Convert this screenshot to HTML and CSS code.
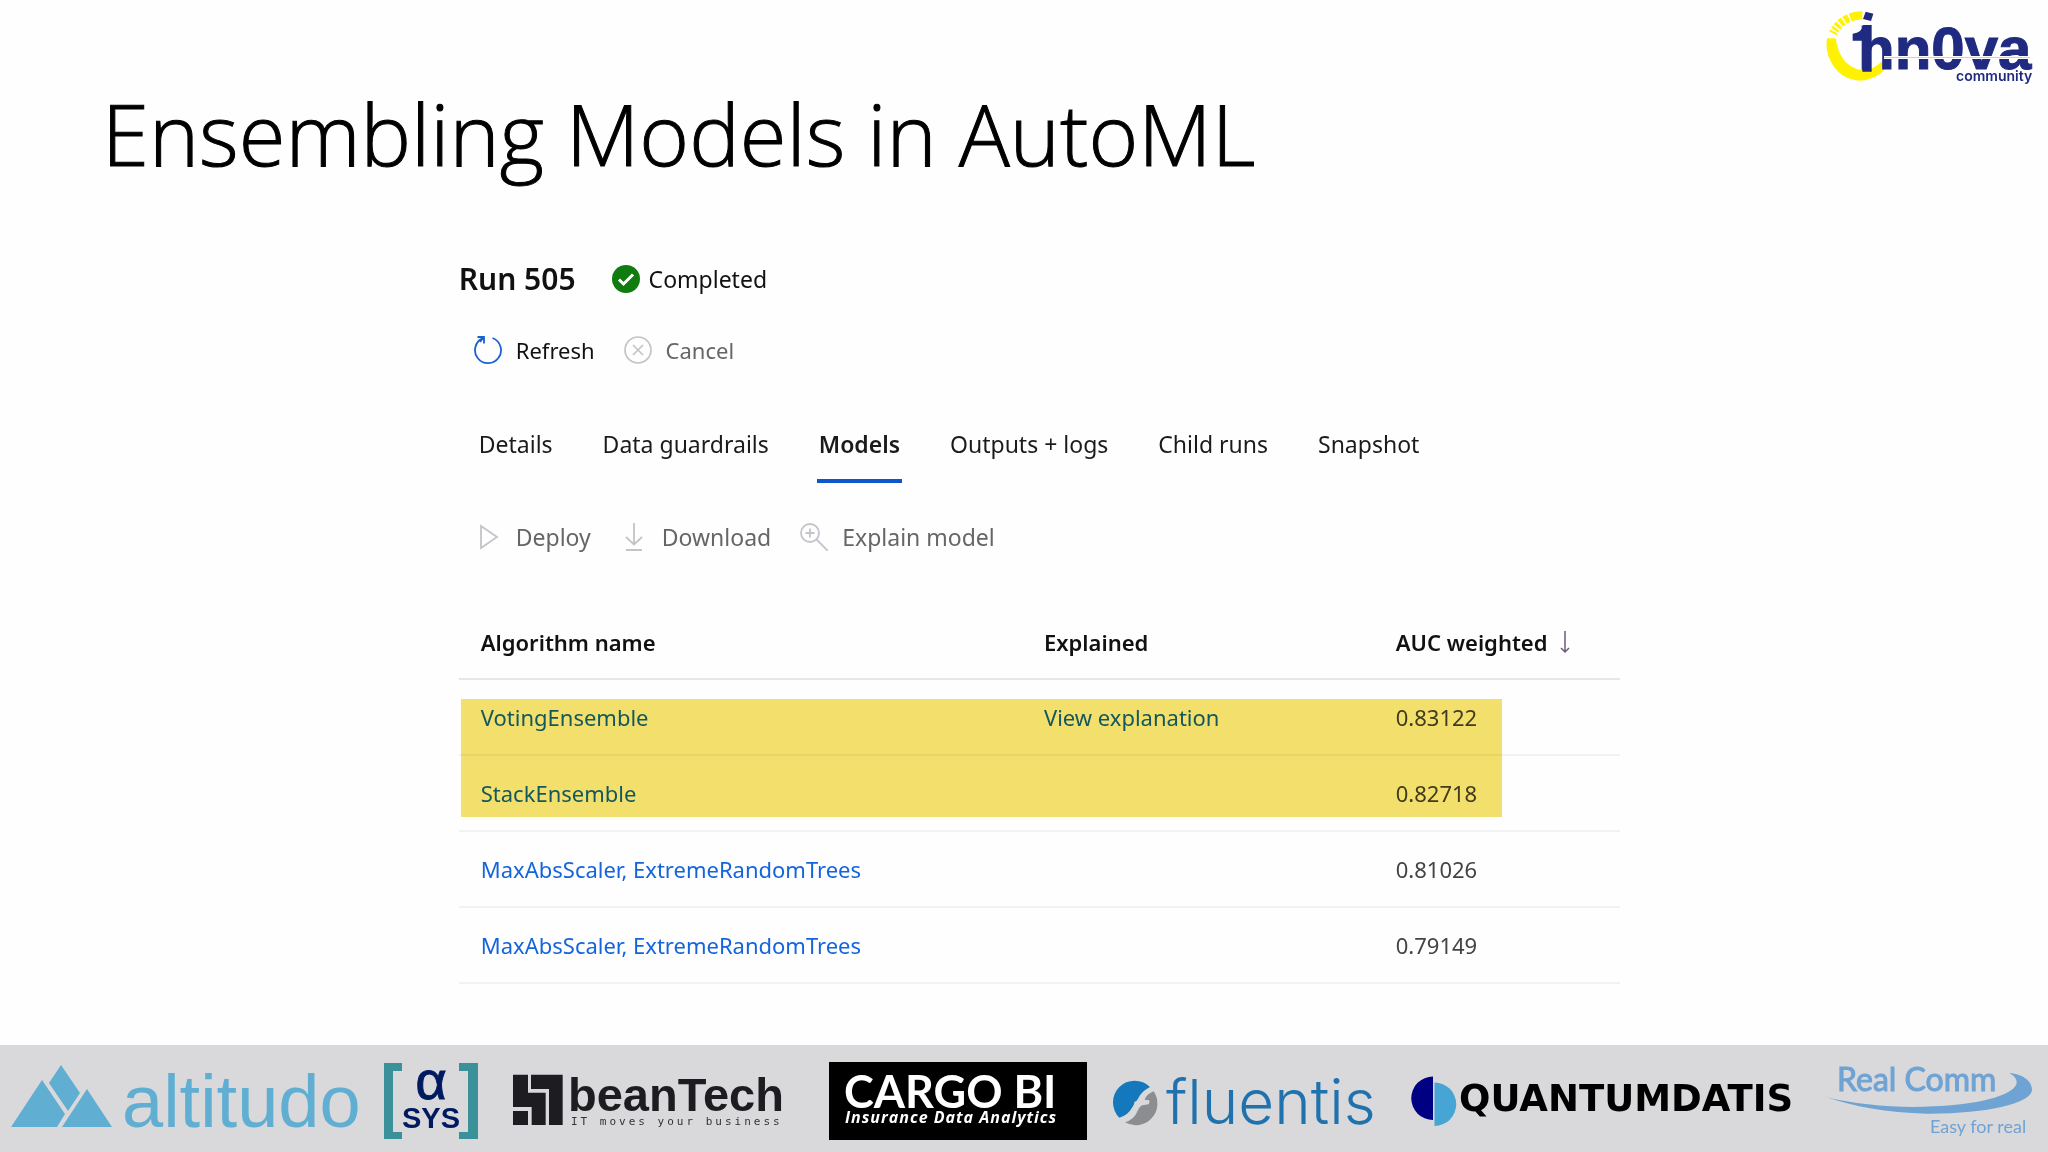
FILE: index.html
```html
<!DOCTYPE html>
<html lang="en">
<head>
<meta charset="utf-8">
<meta name="viewport" content="width=device-width, initial-scale=1">
<title>Ensembling Models in AutoML</title>
<link rel="stylesheet" href="styles.css">
</head>
<body>
<header class="slide-header">
  <h1 class="slide-title">Ensembling Models in AutoML</h1>
  <svg class="community-logo" viewBox="0 0 248 100" role="img" aria-label="1nn0va community">
    <g transform="scale(.33333)">
      <path fill="#fff200" d="M81 115Q75 150 92 184Q120 240 182 242Q225 240 256 208L246 184Q215 216 172 208Q118 190 107 115Z"/>
      <path fill="none" stroke="#fff200" stroke-width="25" stroke-dasharray="6 5 7 5 9 5 11 5 14 5 40" d="M99 100A95 95 0 0 1 187 46"/>
      <path fill="#1f2a80" d="M197 35L220 41L213 63L189 57Z"/>
      <path fill="#1f2a80" d="M158 101Q186 98 190 75H215V215H187V122H158Z"/>
    </g>
    <text class="logo-name" x="58" y="69">hn0va</text>
    <path fill="#fff" d="M84 56H230V59H84Z"/>
    <path fill="#f3dc2a" d="M84 57H230V58H84Z"/>
    <text class="logo-sub" x="156" y="81">community</text>
  </svg>
</header>

<main class="run">
  <div class="run-head">
    <h2 class="run-title">Run 505</h2>
    <span class="status">
      <svg width="28" height="28" viewBox="0 0 28 28" aria-hidden="true"><circle cx="14" cy="14" r="14" fill="#107c10"/><path d="M7 14.500L11.500 19L21 9.500" fill="none" stroke="#fff" stroke-width="3"/></svg>
      Completed
    </span>
  </div>

  <div class="toolbar run-actions">
    <button class="action action-on" type="button">
      <svg width="28" height="30" viewBox="0 0 28 30" fill="none" stroke="#1b62d0" stroke-width="1.800" aria-hidden="true"><path d="M18.500 3A13 13 0 1 1 9 3.200"/><path d="M3.500 2H10V8.500M10 2L6 7"/></svg>
      Refresh
    </button>
    <button class="action" type="button" disabled>
      <svg width="28" height="28" viewBox="0 0 28 28" fill="none" stroke="#c4c4c4" stroke-width="1.700" aria-hidden="true"><circle cx="14" cy="14" r="13"/><path d="M9 9L19 19M19 9L9 19"/></svg>
      Cancel
    </button>
  </div>

  <nav class="tabs" aria-label="Run sections">
    <a class="tab" href="#details">Details</a>
    <a class="tab" href="#guardrails">Data guardrails</a>
    <a class="tab tab-current" href="#models" aria-current="page">Models</a>
    <a class="tab" href="#outputs">Outputs + logs</a>
    <a class="tab" href="#children">Child runs</a>
    <a class="tab" href="#snapshot">Snapshot</a>
  </nav>

  <div class="toolbar model-actions">
    <button class="action" type="button" disabled>
      <svg width="28" height="28" viewBox="0 0 28 28" fill="none" stroke="#c4c4cc" stroke-width="1.800" aria-hidden="true"><path d="M7 3V25L23 14Z"/></svg>
      Deploy
    </button>
    <button class="action" type="button" disabled>
      <svg width="28" height="28" viewBox="0 0 28 28" fill="none" stroke="#c4c4c4" stroke-width="1.800" aria-hidden="true"><path d="M14 0V21M6 14L14 21.500L22 14M6 27H22"/></svg>
      Download
    </button>
    <button class="action" type="button" disabled>
      <svg width="28" height="28" viewBox="0 0 28 28" fill="none" stroke="#c4c4cc" stroke-width="1.800" aria-hidden="true"><circle cx="10" cy="10" r="9"/><path d="M16.500 16.500L28 28M10 5.500V14.500M5.500 10H14.500"/></svg>
      Explain model
    </button>
  </div>

  <div class="models" id="models">
    <table class="models-table">
      <thead>
        <tr>
          <th class="col-name" scope="col">Algorithm name</th>
          <th class="col-explained" scope="col">Explained</th>
          <th scope="col" aria-sort="descending"><span class="sorted">AUC weighted
            <svg width="12" height="24" viewBox="0 0 12 24" fill="none" stroke="#6b5a7a" stroke-width="1.500" aria-hidden="true"><path d="M6 1V22M2 18L6 22L10 18"/></svg></span></th>
        </tr>
      </thead>
      <tbody>
        <tr><td><a href="#voting">VotingEnsemble</a></td><td><a href="#explanation">View explanation</a></td><td>0.83122</td></tr>
        <tr><td><a href="#stack">StackEnsemble</a></td><td></td><td>0.82718</td></tr>
        <tr><td><a href="#trees-1">MaxAbsScaler, ExtremeRandomTrees</a></td><td></td><td>0.81026</td></tr>
        <tr><td><a href="#trees-2">MaxAbsScaler, ExtremeRandomTrees</a></td><td></td><td>0.79149</td></tr>
      </tbody>
    </table>
    <div class="marker"></div>
  </div>
</main>

<footer class="sponsors">
  <svg class="sponsor-l" viewBox="0 5 370 107" role="img" aria-label="altitudo">
    <path fill="#60afd2" d="M11 87L42 40L65 74L57 87ZM61 25L80 53L68 71L49 43ZM87 49L112 87H62Z"/>
    <text class="altitudo" x="122" y="87">altitudo</text>
  </svg>
  <svg class="sponsor-xs" viewBox="370 5 120 107" role="img" aria-label="alpha sys">
    <path fill="#3a9199" d="M402 23H384V99H402V92H393V31H402ZM459 23H478V99H459V92H468V31H459Z"/>
    <text class="alpha" x="431" y="59">α</text>
    <text class="sys" x="431" y="88">SYS</text>
  </svg>
  <svg class="sponsor-m" viewBox="0 5 320 107" role="img" aria-label="beanTech">
    <path transform="scale(.33333)" fill="#1d1c20" d="M69 104H114V158H167V255H125V201H69ZM123 104H218V255H177V147H123ZM69 213H114V255H69Z"/>
    <text class="bean" x="78" y="71">beanTech</text>
    <text class="bean-sub" x="81" y="85">IT moves your business</text>
  </svg>
  <svg class="sponsor-s" viewBox="0 5 290 107" role="img" aria-label="Cargo BI">
    <path fill="#000" d="M19 22H277V100H19Z"/>
    <text class="cargo" x="34" y="68">CARGO BI</text>
    <text class="cargo-sub" x="35" y="83">Insurance Data Analytics</text>
  </svg>
  <svg class="sponsor-s" viewBox="0 5 290 107" role="img" aria-label="fluentis">
    <g transform="scale(.33333)">
      <path fill="#1478bd" d="M150 141A65 65 0 1 0 58 233Q84 226 95 205Q104 192 103 186Q110 184 114 176Q122 156 150 141Z"/>
      <path fill="#8b8d91" d="M161 154A65 65 0 0 1 75 247Q103 238 113 212Q120 195 132 195L146 193Q151 186 147 180L134 180Q138 163 161 154Z"/>
    </g>
    <text class="fluentis" x="66" y="84">fluentis</text>
  </svg>
  <svg class="sponsor-xl" viewBox="0 5 420 107" role="img" aria-label="Quantumdatis">
    <path fill="#000082" d="M43 36.500V80A21.700 21.700 0 0 1 43 36.500Z"/>
    <path fill="#46a5d5" d="M44.500 42.500V86A21.700 21.700 0 0 0 44.500 42.500Z"/>
    <text class="quantum" x="69" y="71">QUANTUMDATIS</text>
  </svg>
  <svg class="sponsor-xxs" viewBox="10 5 238 107" role="img" aria-label="Real Comm">
    <text class="real" x="37" y="51">Real Comm</text>
    <path transform="scale(.33333)" fill="#6fa3d4" d="M80 172C170 195 300 205 400 199C520 195 640 170 650 130C652 115 640 106 628 99C670 102 697 125 696 150C694 190 560 222 380 221C260 218 160 200 80 172Z"/>
    <text class="real-sub" x="130" y="93">Easy for real</text>
  </svg>
</footer>
</body>
</html>
```
FILE: styles.css
```css
* { box-sizing: border-box; }

body {
  margin: 0;
  min-height: 100vh;
  display: flex;
  flex-direction: column;
  background: #fefefe;
  color: #111;
  font: 22px/32px "Noto Sans", "Open Sans", sans-serif;
}

/* Header */
.slide-header {
  display: flex;
  justify-content: space-between;
  align-items: flex-start;
}
.slide-title {
  margin: 83px 0 0 102px;
  font: 300 85px/100px "Open Sans", sans-serif;
  color: #000;
  -webkit-text-stroke: 1px #000;
}
.community-logo { width: 248px; height: 100px; flex: none; }
.logo-name { font: 700 60px "Liberation Sans", sans-serif; fill: #1f2a80; stroke: #1f2a80; }
.logo-sub { font: 600 14px Inter, sans-serif; fill: #1f2a80; }

/* Run panel */
.run {
  flex: 1;
  padding: 75px 20.9% 48px 22.4%;
}
.run-head { display: flex; align-items: center; gap: 36px; }
.run-title { margin: 0; font-size: 30px; line-height: 42px; font-weight: 600; }
.status { display: flex; align-items: center; gap: 9px; font-size: 23px; }

.toolbar { display: flex; gap: 29px; padding-left: 15px; }
.run-actions { margin-top: 34px; }
.model-actions { margin-top: 38px; font-size: 23px; }
.action {
  display: flex;
  align-items: center;
  gap: 14px;
  height: 32px;
  padding: 0;
  border: 0;
  background: none;
  font: inherit;
  color: #666;
}
.action-on { color: #111; }

.tabs { display: flex; gap: 46px; margin-top: 62px; padding-left: 18px; font-size: 23px; }
.tab {
  padding: 0 2px 19px;
  border-bottom: 4px solid transparent;
  color: #1b1b1b;
  text-decoration: none;
}
.tab-current { font-weight: 600; border-color: #0f55cc; }

/* Models table */
.models { position: relative; margin-top: 54px; }
.models-table { width: 100%; border-spacing: 0; table-layout: fixed; }
.models-table th,
.models-table td { height: 76px; padding: 0 0 0 22px; text-align: left; }
.models-table th {
  height: 73px;
  padding-bottom: 1px;
  border-bottom: 2px solid #e6e6e6;
  font-weight: 600;
}
.models-table td { border-bottom: 2px solid #f2f2f4; color: #444; }
.models-table a { color: #1464dc; text-decoration: none; }
.col-name { width: 48.5%; }
.col-explained { width: 30.3%; }
.sorted { display: flex; align-items: center; gap: 11px; }

/* Highlighter stroke over the two ensemble rows */
.marker {
  position: absolute;
  top: 92px;
  left: 2px;
  width: 89.7%;
  height: 118px;
  background: #f4e06c;
  mix-blend-mode: multiply;
  pointer-events: none;
}

/* Sponsor strip */
.sponsors { display: flex; background: #d9d8da; }
.sponsors svg { display: block; min-width: 0; }
.sponsor-l { flex: 370 1 0; }
.sponsor-xs { flex: 120 1 0; }
.sponsor-m { flex: 320 1 0; }
.sponsor-s { flex: 290 1 0; }
.sponsor-xl { flex: 420 1 0; }
.sponsor-xxs { flex: 238 1 0; }

.altitudo { font: 74px "Liberation Sans", sans-serif; fill: #60afd2; }
.alpha { font: 54px "Liberation Sans", sans-serif; fill: #001a60; stroke: #001a60; text-anchor: middle; }
.sys { font: 700 29px "Liberation Sans", sans-serif; fill: #001a60; text-anchor: middle; }
.bean { font: 700 47px "Liberation Sans", sans-serif; fill: #1d1c20; }
.bean-sub { font: 11px "DejaVu Sans Mono", monospace; letter-spacing: 3px; fill: #333; }
.cargo { font: 700 45px Lato, sans-serif; fill: #fff; }
.cargo-sub { font: italic 700 16px "Open Sans", sans-serif; letter-spacing: 1px; fill: #fff; }
.fluentis { font: 300 62px Inter, sans-serif; fill: #1f72ad; }
.quantum { font: 700 37px "DejaVu Sans", sans-serif; fill: #000; }
.real { font: 32px Lato, sans-serif; fill: #6fa3d4; stroke: #6fa3d4; }
.real-sub { font: 18px Lato, sans-serif; fill: #6fa3d4; }
```
